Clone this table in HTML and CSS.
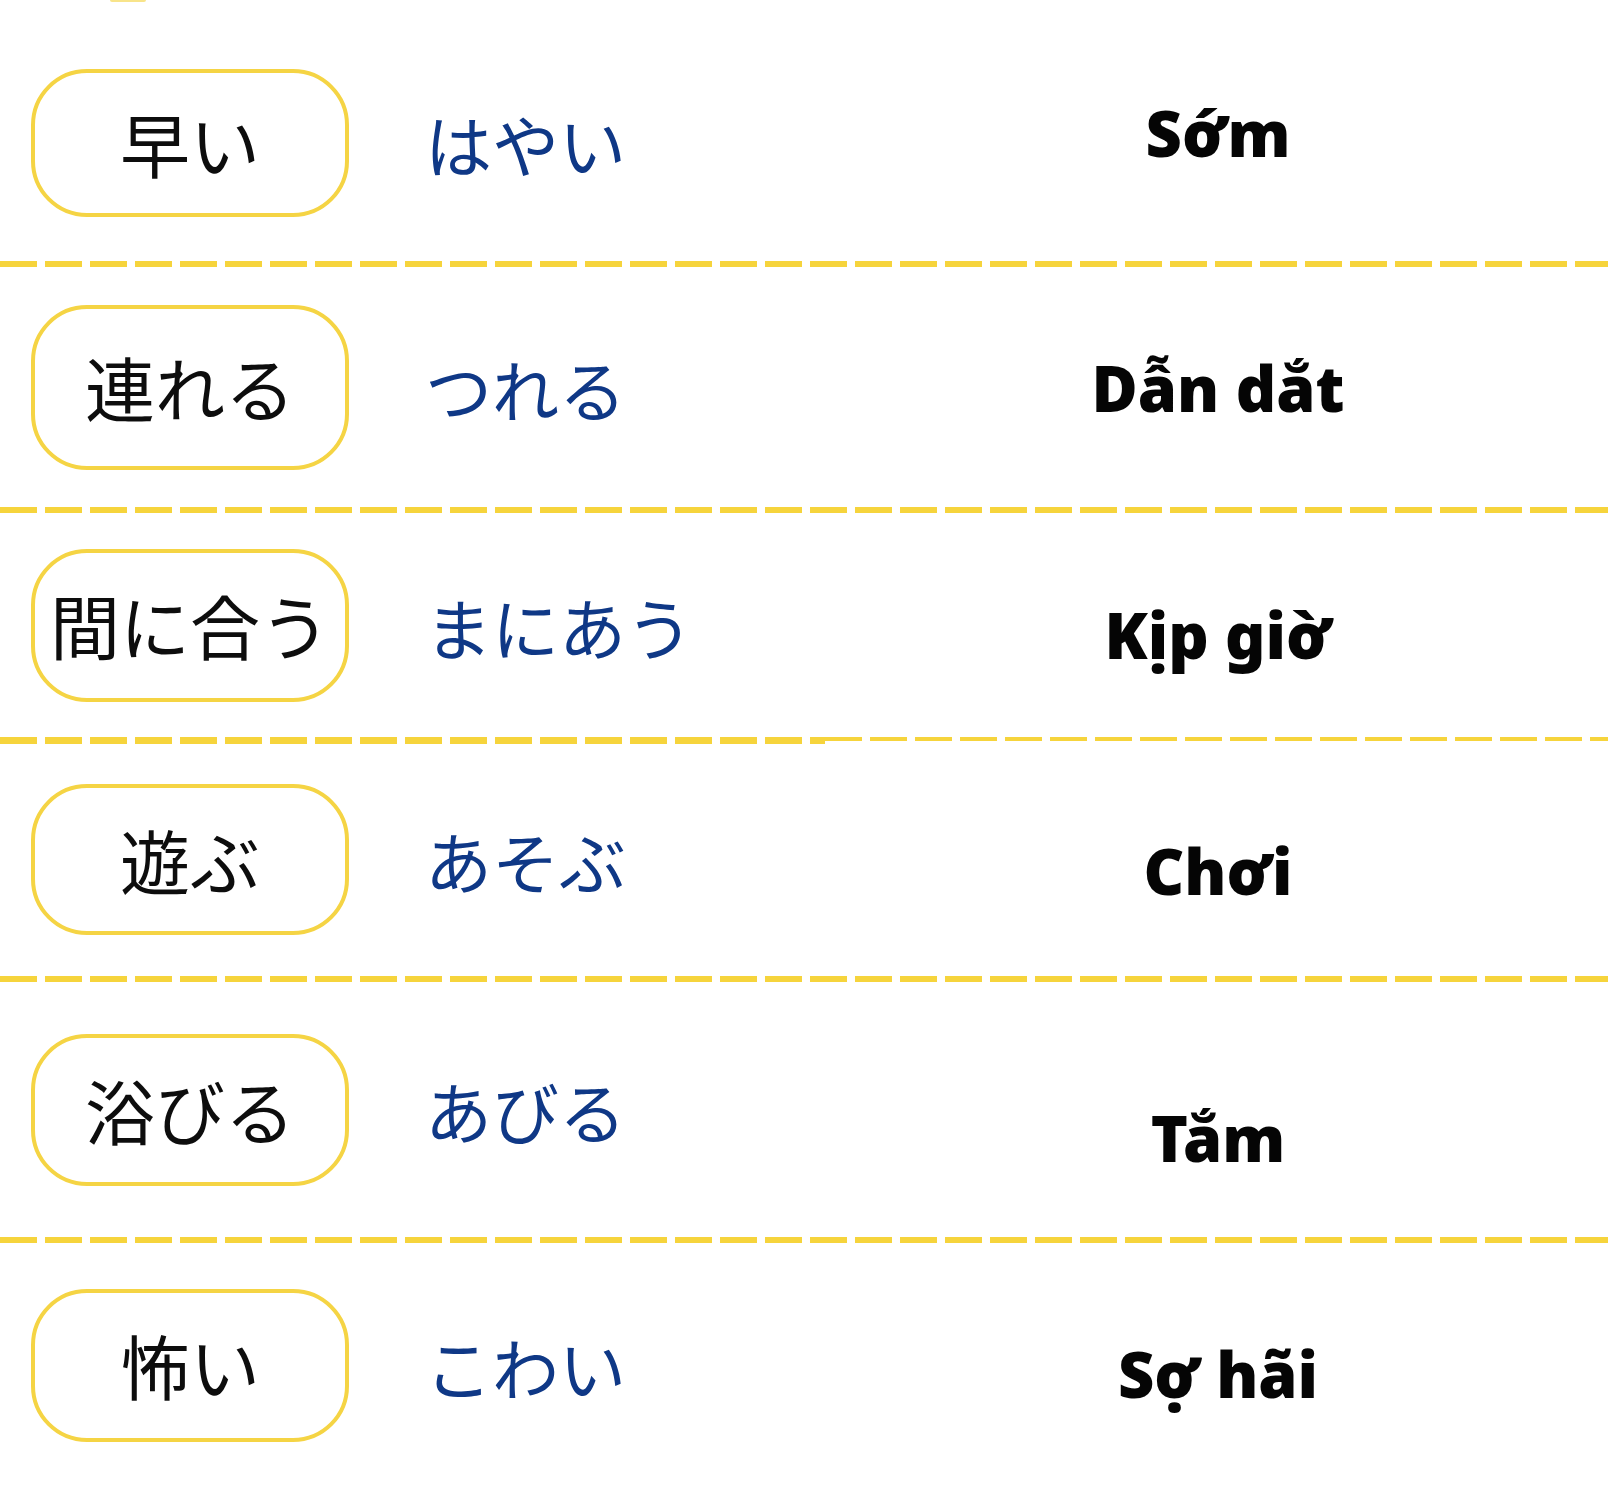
FILE: index.html
```html
<!DOCTYPE html>
<html lang="ja">
<head>
<meta charset="utf-8">
<title>Từ vựng</title>
<link rel="stylesheet" href="styles.css">
</head>
<body>
<main class="sheet">
  <div class="stub"></div>

  <section class="row r1">
    <div class="pill">早い</div>
    <div class="kana">はやい</div>
    <div class="meaning" lang="vi">Sớm</div>
  </section>
  <div class="rule"></div>

  <section class="row r2">
    <div class="pill">連れる</div>
    <div class="kana">つれる</div>
    <div class="meaning" lang="vi">Dẫn dắt</div>
  </section>
  <div class="rule"></div>

  <section class="row r3">
    <div class="pill">間に合う</div>
    <div class="kana">まにあう</div>
    <div class="meaning" lang="vi">Kịp giờ</div>
  </section>
  <div class="rule rule--split">
    <div class="rule-left"></div>
    <div class="rule-right"></div>
  </div>

  <section class="row r4">
    <div class="pill">遊ぶ</div>
    <div class="kana">あそぶ</div>
    <div class="meaning" lang="vi">Chơi</div>
  </section>
  <div class="rule"></div>

  <section class="row r5">
    <div class="pill">浴びる</div>
    <div class="kana">あびる</div>
    <div class="meaning" lang="vi">Tắm</div>
  </section>
  <div class="rule"></div>

  <section class="row r6">
    <div class="pill">怖い</div>
    <div class="kana">こわい</div>
    <div class="meaning" lang="vi">Sợ hãi</div>
  </section>
</main>
</body>
</html>
```

FILE: styles.css
```css
html, body {
  margin: 0;
  padding: 0;
  background: #ffffff;
}

body {
  width: 1608px;
  height: 1487px;
  overflow: hidden;
  font-family: "Noto Sans CJK JP", "Noto Sans", sans-serif;
}

.sheet {
  display: flex;
  flex-direction: column;
}

.stub {
  width: 36px;
  height: 2px;
  margin-left: 110px;
  background: #f8e48a;
  border-radius: 0 0 20px 20px;
}

.row {
  display: grid;
  grid-template-columns: 318px 479px 1fr;
  align-items: center;
  padding-left: 31px;
  box-sizing: border-box;
}

.pill {
  box-sizing: border-box;
  height: 151px;
  border: 4px solid #f5d444;
  border-radius: 56px;
  display: flex;
  align-items: center;
  justify-content: center;
  font-family: "Noto Sans CJK JP", sans-serif;
  font-size: 70px;
  font-weight: 400;
  color: #0d0d0d;
  line-height: 1;
  white-space: nowrap;
}

.kana {
  padding-left: 76px;
  font-family: "Noto Sans CJK JP", sans-serif;
  font-size: 67px;
  font-weight: 400;
  color: #0f3886;
  line-height: 1;
  white-space: nowrap;
}

.meaning {
  text-align: center;
  font-family: "Noto Sans", "DejaVu Sans", sans-serif;
  font-size: 63px;
  font-weight: 900;
  color: #050505;
  line-height: 1;
  white-space: nowrap;
}

.rule {
  height: 6px;
  background: repeating-linear-gradient(to right, #f6d43c 0 37px, transparent 37px 45px);
}

.rule--split {
  display: flex;
  align-items: flex-start;
  background: none;
}

.rule-left {
  width: 825px;
  height: 7px;
  background: repeating-linear-gradient(to right, #f6d43c 0 37px, transparent 37px 45px);
}

.rule-right {
  flex: 1;
  height: 4px;
  background: repeating-linear-gradient(to right, #f6d43c 0 37px, transparent 37px 45px);
}

.r1 { height: 259px; padding-top: 22px; }
.r1 .pill { height: 148px; }
.r1 .meaning { padding-bottom: 20px; }

.r2 { height: 240px; }
.r2 .pill { height: 165px; }

.r3 { height: 224px; }
.r3 .pill { height: 153px; }
.r3 .meaning { padding-top: 18px; }

.r4 { height: 233px; }
.r4 .meaning { padding-top: 22px; }

.r5 { height: 255px; }
.r5 .pill { height: 152px; }
.r5 .meaning { padding-top: 56px; }

.r6 { height: 244px; }
.r6 .pill { height: 153px; }
.r6 .meaning { padding-top: 16px; }
```
